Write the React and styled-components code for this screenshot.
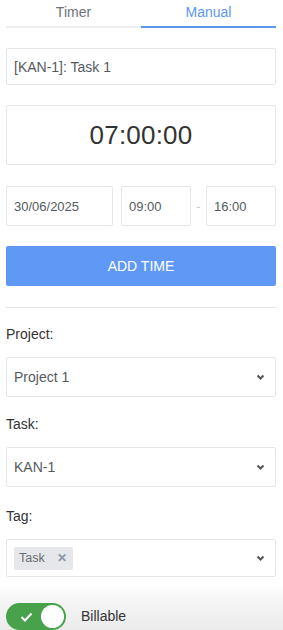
import React, { useState } from "react";
import styled, { createGlobalStyle } from "styled-components";

const GlobalStyle = createGlobalStyle`
    html, body {
        margin: 0;
        padding: 0;
        background: #ffffff;
        font-family: "Liberation Sans", Arial, Helvetica, sans-serif;
        color: #333333;
    }
    * {
        box-sizing: border-box;
    }
`;

const Page = styled.div`
    width: 283px;
    height: 630px;
    overflow: hidden;
    padding: 0 7px 0 6px;
    display: flex;
    flex-direction: column;
    font-family: "Liberation Sans", Arial, Helvetica, sans-serif;
`;

const Tabs = styled.div`
    display: flex;
    height: 28px;
`;

const Tab = styled.div`
    flex: 1;
    text-align: center;
    font-size: 14px;
    line-height: 24px;
    color: ${(p) => (p.$active ? "#5d97f1" : "#6c727c")};
    border-bottom: 2px solid ${(p) => (p.$active ? "#5d97f1" : "#eceef1")};
    cursor: pointer;
`;

const Box = styled.div`
    display: flex;
    align-items: center;
    border: 1px solid #e4e6ea;
    border-radius: 2px;
    background: #ffffff;
    height: ${(p) => p.$h || 40}px;
    padding: 0 ${(p) => p.$pad ?? 7}px;
    font-size: ${(p) => p.$size || 14}px;
    color: #555a60;
`;

const TaskInput = styled(Box)`
    margin-top: 20px;
`;

const Duration = styled(Box)`
    margin-top: 20px;
    justify-content: center;
    color: #333333;
    letter-spacing: 0.2px;
`;

const DateRow = styled.div`
    display: flex;
    align-items: center;
    margin-top: 21px;
`;

const Dash = styled.span`
    width: 15px;
    text-align: center;
    color: #c8cbd0;
    font-size: 13px;
`;

const AddButton = styled.button`
    margin-top: 20px;
    height: 40px;
    width: 100%;
    border: none;
    border-radius: 2px;
    background: #5f99f5;
    color: #ffffff;
    font-family: inherit;
    font-size: 14px;
    cursor: pointer;
`;

const Divider = styled.hr`
    border: none;
    border-top: 1px solid #e6e7ea;
    margin: 21px 0 17px;
`;

const Field = styled.div`
    margin-top: ${(p) => p.$top || 0}px;
`;

const Label = styled.div`
    font-size: 14px;
    line-height: 18px;
    color: #333333;
    margin-bottom: 14px;
`;

const SelectBox = styled(Box)`
    justify-content: space-between;
    padding: 0 10px 0 7px;
`;

const Chip = styled.span`
    display: inline-flex;
    align-items: center;
    height: 23px;
    padding: 0 6px 0 5px;
    background: #e5e7ea;
    border-radius: 2px;
    font-size: 12.5px;
    color: #686c72;
    gap: 12px;
`;

const ChipClose = styled.span`
    color: #8a97a8;
    font-size: 12px;
    font-weight: bold;
`;

const Footer = styled.div`
    margin: 8px -7px 0 -6px;
    padding: 18px 7px 0 6px;
    flex: 1;
    background: linear-gradient(to bottom, #ffffff 0px, #f6f6f6 14px, #ebebeb 45px);
    display: flex;
    align-items: flex-start;
    gap: 15px;
`;

const Switch = styled.div`
    width: 60px;
    height: 27px;
    border-radius: 14px;
    background: #47a24b;
    display: flex;
    align-items: center;
    justify-content: space-between;
    padding: 0 2px 0 14px;
    cursor: pointer;
`;

const Knob = styled.span`
    width: 23px;
    height: 23px;
    border-radius: 50%;
    background: #ffffff;
`;

const SwitchLabel = styled.span`
    font-size: 14px;
    line-height: 27px;
    color: #333333;
`;

const Chevron = () => (
    <svg width="9" height="6" viewBox="0 0 9 6">
        <polyline points="1.5,1.5 4.5,4.5 7.5,1.5" fill="none" stroke="#555" strokeWidth="2" />
    </svg>
);

const Check = () => (
    <svg width="13" height="10" viewBox="0 0 13 10">
        <polyline points="1.5,5 5,8.5 11.5,1.5" fill="none" stroke="#fff" strokeWidth="2" />
    </svg>
);

const App = () => {
    const [tab, setTab] = useState("manual");

    return (
        <>
            <GlobalStyle />
            <Page>
                <Tabs>
                    <Tab $active={tab === "timer"} onClick={() => setTab("timer")}>Timer</Tab>
                    <Tab $active={tab === "manual"} onClick={() => setTab("manual")}>Manual</Tab>
                </Tabs>

                <TaskInput $h={37}>[KAN-1]: Task 1</TaskInput>

                <Duration $h={60} $size={26}>07:00:00</Duration>

                <DateRow>
                    <Box $size={13} style={{ width: 107 }}>30/06/2025</Box>
                    <Box $size={13} style={{ width: 70, marginLeft: 8 }}>09:00</Box>
                    <Dash>-</Dash>
                    <Box $size={13} style={{ flex: 1 }}>16:00</Box>
                </DateRow>

                <AddButton>ADD TIME</AddButton>

                <Divider />

                <Field>
                    <Label>Project:</Label>
                    <SelectBox>
                        <span>Project 1</span>
                        <Chevron />
                    </SelectBox>
                </Field>

                <Field $top={18}>
                    <Label>Task:</Label>
                    <SelectBox>
                        <span>KAN-1</span>
                        <Chevron />
                    </SelectBox>
                </Field>

                <Field $top={20}>
                    <Label>Tag:</Label>
                    <SelectBox $h={38}>
                        <Chip>
                            Task
                            <ChipClose>✕</ChipClose>
                        </Chip>
                        <Chevron />
                    </SelectBox>
                </Field>

                <Footer>
                    <Switch>
                        <Check />
                        <Knob />
                    </Switch>
                    <SwitchLabel>Billable</SwitchLabel>
                </Footer>
            </Page>
        </>
    );
};

export default App;
